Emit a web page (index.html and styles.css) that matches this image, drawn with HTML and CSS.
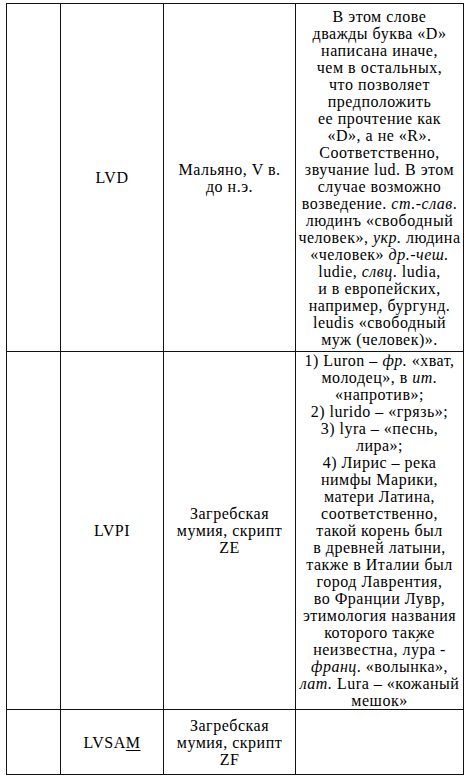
FILE: index.html
```html
<!DOCTYPE html>
<html lang="ru">
<head>
<meta charset="utf-8">
<link rel="stylesheet" href="styles.css">
</head>
<body>
<table class="tbl">
  <colgroup>
    <col class="c1"><col class="c2"><col class="c3"><col class="c4">
  </colgroup>
  <tr class="r1">
    <td></td>
    <td>LVD</td>
    <td>Мальяно, V в.<br>до н.э.</td>
    <td>В этом слове<br>дважды буква «D»<br>написана иначе,<br>чем в остальных,<br>что позволяет<br>предположить<br>ее прочтение как<br>«D», а не «R».<br>Соответственно,<br>звучание lud. В этом<br>случае возможно<br>возведение. <i>ст.-слав</i>.<br>людинъ «свободный<br>человек», <i>укр.</i> людина<br>«человек» <i>др.-чеш.</i><br>ludie, <i>слвц</i>. ludia,<br>и в европейских,<br>например, бургунд.<br>leudis «свободный<br>муж (человек)».</td>
  </tr>
  <tr class="r2">
    <td></td>
    <td>LVPI</td>
    <td>Загребская<br>мумия, скрипт<br>ZE</td>
    <td>1) Luron – <i>фр.</i> «хват,<br>молодец», в <i>ит.</i><br>«напротив»;<br>2) lurido – «грязь»;<br>3) lyra – «песнь,<br>лира»;<br>4) Лирис – река<br>нимфы Марики,<br>матери Латина,<br>соответственно,<br>такой корень был<br>в древней латыни,<br>также в Италии был<br>город Лаврентия,<br>во Франции Лувр,<br>этимология названия<br>которого также<br>неизвестна, лу́ра -<br><i>франц</i>. «волынка»,<br><i>лат.</i> Lura – «кожаный<br>мешок»</td>
  </tr>
  <tr class="r3">
    <td></td>
    <td>LVSA<span class="u">M</span></td>
    <td>Загребская<br>мумия, скрипт<br>ZF</td>
    <td></td>
  </tr>
</table>
</body>
</html>
```

FILE: styles.css
```css
html, body {
  margin: 0;
  padding: 0;
  background: #fff;
}
body {
  padding: 3px 0 0 6px;
  font-family: "Liberation Serif", "Times New Roman", serif;
  font-size: 16px;
  line-height: 17px;
  letter-spacing: 0.5px;
  color: #000;
}
.tbl {
  border-collapse: collapse;
  table-layout: fixed;
  width: 457px;
}
.c1 { width: 54px; }
.c2 { width: 103px; }
.c3 { width: 132px; }
.c4 { width: 168px; }
.tbl td {
  border: 1px solid #111;
  padding: 0;
  text-align: center;
  vertical-align: middle;
  white-space: nowrap;
}
.r1 td { height: 347px; }
.r2 td { height: 357px; }
.r3 td { height: 64px; }
.u {
  text-decoration: underline;
  text-underline-offset: 2px;
}
```
